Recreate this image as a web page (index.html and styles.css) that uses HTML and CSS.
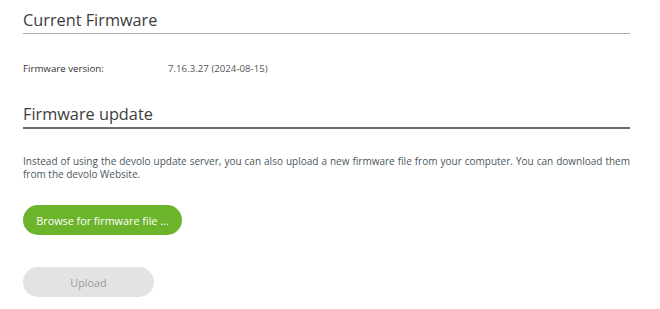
FILE: index.html
```html
<!DOCTYPE html>
<html>
<head>
<meta charset="utf-8">
<link rel="stylesheet" href="styles.css">
</head>
<body>
<div class="page">
  <section class="section">
    <h2 class="title title-light">Current Firmware</h2>
    <div class="row">
      <span class="label">Firmware version:</span>
      <span class="value">7.16.3.27 (2024-08-15)</span>
    </div>
  </section>
  <section class="section">
    <h2 class="title title-dark">Firmware update</h2>
    <p class="desc">Instead of using the devolo update server, you can also upload a new firmware file from your computer. You can download them from the devolo Website.</p>
    <div class="actions">
      <button class="btn btn-green">Browse for firmware file ...</button>
      <button class="btn btn-disabled">Upload</button>
    </div>
  </section>
</div>
</body>
</html>
```
FILE: styles.css
```css
html, body {
  margin: 0;
  padding: 0;
  background: #fff;
}
body {
  font-family: "Open Sans", "Liberation Sans", sans-serif;
  color: #333;
}
.page {
  padding: 8px 30px 0 23px;
}
.title {
  margin: 0;
  font-weight: 400;
  font-size: 16.3px;
  line-height: 24px;
  color: #3c3c3c;
  padding-bottom: 1px;
}
.title-light {
  border-bottom: 1px solid #a8a8a8;
}
.title-dark {
  border-bottom: 2px solid #6c6c6c;
}
.row {
  display: flex;
  font-size: 9.7px;
  line-height: 14px;
  margin-top: 28px;
  margin-bottom: 26px;
}
.label {
  width: 145px;
  color: #333;
}
.value {
  color: #555;
}
.desc {
  margin: 26px 0 0;
  font-size: 10px;
  line-height: 12.5px;
  color: #4a5660;
  text-align: justify;
}
.actions {
  display: flex;
  flex-direction: column;
  align-items: flex-start;
  gap: 32px;
  margin-top: 25px;
}
.btn {
  border: none;
  border-radius: 16px;
  height: 30px;
  font-family: "Open Sans", "Liberation Sans", sans-serif;
  font-size: 10.8px;
  padding: 0;
}
.btn-green {
  width: 159px;
  background: #6cb42c;
  color: #ffffff;
  font-weight: 500;
}
.btn-disabled {
  width: 131px;
  background: #e3e3e3;
  color: #9a9a9a;
}
```
